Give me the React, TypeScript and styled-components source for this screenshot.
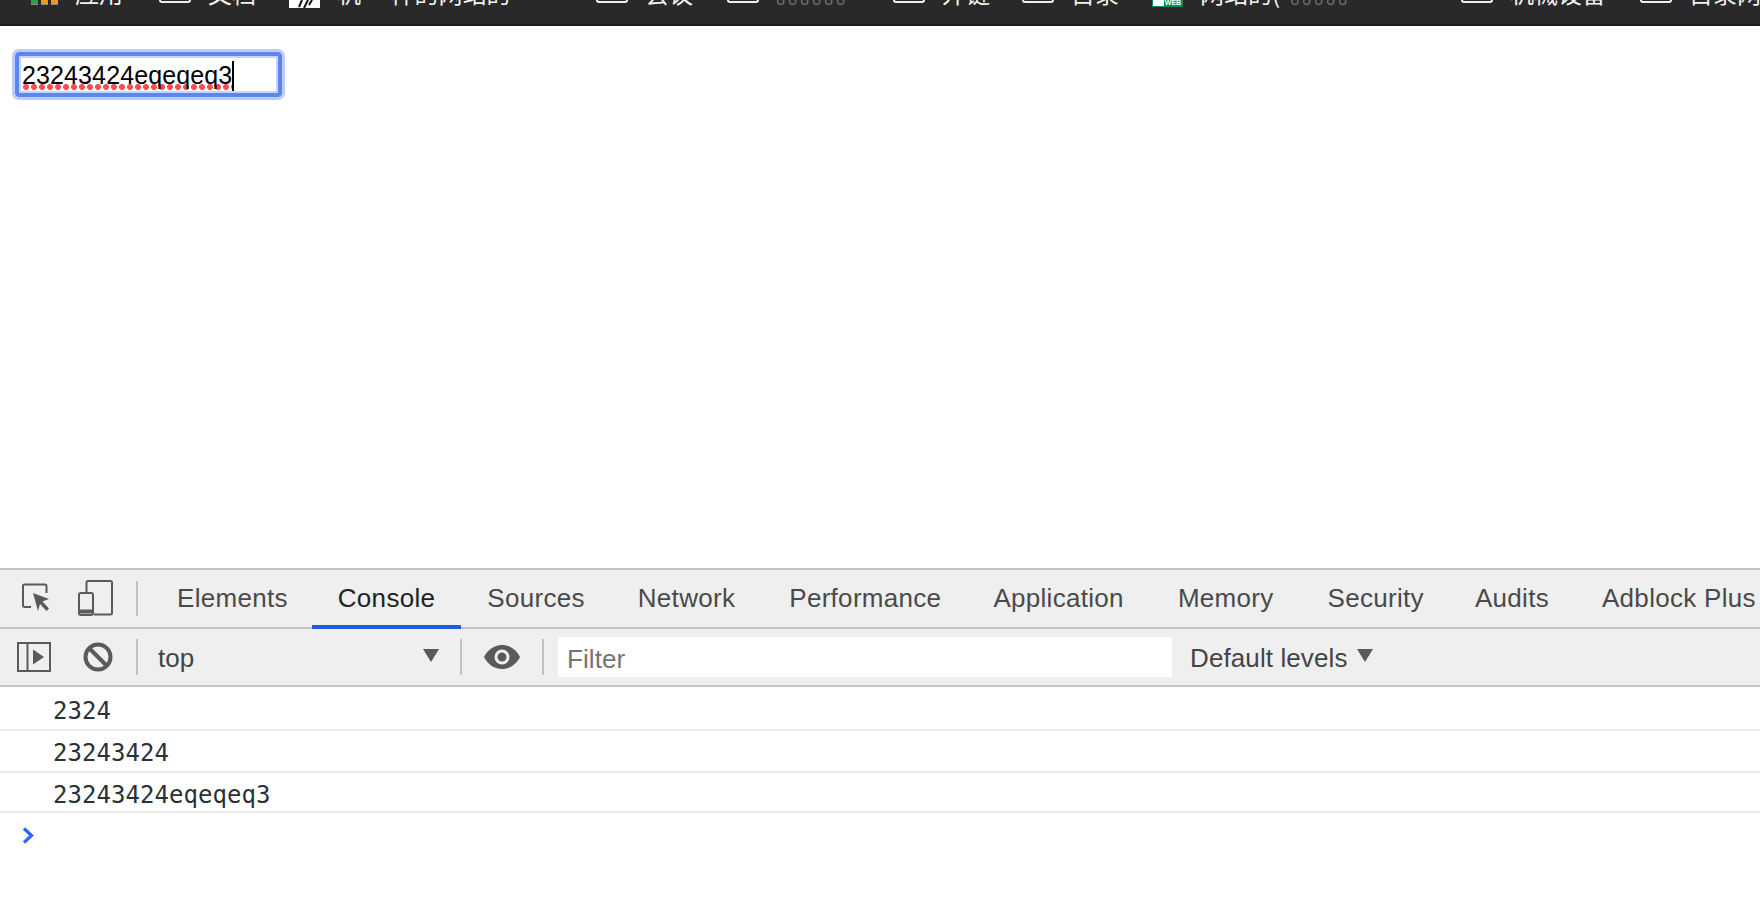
import React from 'react'
import styled, { createGlobalStyle } from 'styled-components'

const GlobalStyle = createGlobalStyle`
  html, body {
    margin: 0;
    padding: 0;
    height: 100%;
    background: #ffffff;
    overflow: hidden;
  }
`

const Page = styled.div`
  width: 1760px;
  height: 906px;
  display: flex;
  flex-direction: column;
  font-family: 'Liberation Sans', Arial, sans-serif;
  overflow: hidden;
`

const BookmarkBar = styled.div`
  flex: none;
  height: 24px;
  background: #292929;
  border-bottom: 2px solid #1e1e1e;
  overflow: hidden;
`

const BookmarkRow = styled.div`
  display: flex;
  align-items: flex-end;
  height: 30px;
  margin-top: -22px;
  padding-left: 31px;
`

const Bookmark = styled.div<{ $width: number }>`
  flex: none;
  display: flex;
  align-items: flex-end;
  gap: 17px;
  width: ${({ $width }) => $width}px;
  white-space: nowrap;
`

const BookmarkLabel = styled.span<{ $dim?: boolean }>`
  font-family: 'Noto Sans CJK SC', sans-serif;
  font-size: 24px;
  line-height: 24px;
  height: 24px;
  margin-bottom: 3px;
  color: ${({ $dim }) => ($dim ? '#77777a' : '#f2f2f2')};
`

const DimTail = styled.span`
  margin-left: 10px;
  color: #77777a;
`

const Folder = styled.div`
  flex: none;
  width: 32px;
  height: 26px;
  margin-bottom: 5px;
  box-sizing: border-box;
  border: 2px solid #f0f0f0;
  border-radius: 3px;
`

const Favicon = styled.div`
  flex: none;
  display: flex;
  justify-content: center;
  align-items: flex-end;
  width: 31px;
  height: 24px;
  background: #ffffff;
`

const WebIcon = styled.div`
  flex: none;
  display: flex;
  justify-content: flex-end;
  align-items: flex-end;
  width: 31px;
  height: 24px;
  margin-bottom: 1px;
  box-sizing: border-box;
  border: 1px solid #0f8a54;
  background: #ffffff;
`

const WebBadge = styled.span`
  width: 18px;
  height: 7px;
  background: #0f8a54;
  color: #ffffff;
  font-size: 7px;
  line-height: 7px;
  font-weight: 700;
  text-align: center;
`

const AppsIcon = styled.div`
  flex: none;
  display: flex;
  gap: 3px;
  margin-bottom: 3px;
`

const AppsBar = styled.div<{ $color: string }>`
  width: 7px;
  height: 24px;
  background: ${({ $color }) => $color};
  border-bottom: 1px solid #8a8a8a;
`

const Viewport = styled.div`
  flex: none;
  height: 542px;
  box-sizing: border-box;
  padding: 23px 0 0 12px;
  background: #ffffff;
`

const FocusedField = styled.div`
  display: flex;
  align-items: center;
  box-sizing: border-box;
  width: 273px;
  height: 51px;
  padding: 2px 0 0 7px;
  background: #ffffff;
  border: 3px solid #b9cdfa;
  border-radius: 7px;
  box-shadow: inset 0 0 0 4px #5c85ee, inset 0 0 0 6px #c4d4fb;
`

const FieldText = styled.span`
  display: block;
  height: 29px;
  font-size: 25px;
  line-height: 29px;
  letter-spacing: 0.12px;
  color: #000000;
  background-image: radial-gradient(circle at 4px 3px, #ff4b55 2.6px, transparent 3.4px);
  background-size: 8px 6px;
  background-repeat: repeat-x;
  background-position: 0 100%;
`

const Caret = styled.span`
  width: 2px;
  height: 30px;
  background: #000000;
`

const DevTools = styled.div`
  flex: 1;
  display: flex;
  flex-direction: column;
  background: #ffffff;
`

const Toolbar = styled.div<{ $height: number; $closed?: boolean }>`
  flex: none;
  display: flex;
  align-items: center;
  height: ${({ $height }) => $height}px;
  background: #efefef;
  border-top: 2px solid #c5c5c5;
  border-bottom: ${({ $closed }) => ($closed ? '2px solid #c5c5c5' : 'none')};
  white-space: nowrap;
`

const IconSlot = styled.div<{ $width: number; $trail?: number }>`
  flex: none;
  display: flex;
  justify-content: center;
  align-items: center;
  box-sizing: border-box;
  width: ${({ $width }) => $width}px;
  padding-right: ${({ $trail }) => $trail ?? 0}px;
  color: #5a5a5a;
`

const Divider = styled.div<{ $height: number }>`
  flex: none;
  width: 2px;
  height: ${({ $height }) => $height}px;
  background: #c2c2c2;
`

const Tabs = styled.div`
  display: flex;
  align-self: stretch;
  margin-left: 13px;
`

const Tab = styled.div<{ $active?: boolean; $nudge: number }>`
  position: relative;
  display: flex;
  align-items: center;
  box-sizing: border-box;
  padding: 2px ${({ $nudge }) => 26 + $nudge}px 0 26px;
  margin-bottom: -2px;
  font-size: 26px;
  letter-spacing: 0.3px;
  color: ${({ $active }) => ($active ? '#222222' : '#4a4a4a')};
  border-bottom: 4px solid ${({ $active }) => ($active ? '#1a5fdd' : 'transparent')};
`

const ContextSelect = styled.div`
  flex: none;
  display: flex;
  justify-content: space-between;
  align-items: center;
  box-sizing: border-box;
  width: 322px;
  padding: 2px 21px 0 20px;
  font-size: 26px;
  color: #444444;
`

const Arrow = styled.span`
  flex: none;
  width: 0;
  height: 0;
  margin-bottom: 6px;
  border-left: 8px solid transparent;
  border-right: 8px solid transparent;
  border-top: 13px solid #5a5a5a;
`

const FilterBox = styled.div`
  flex: none;
  display: flex;
  align-items: center;
  box-sizing: border-box;
  width: 614px;
  height: 40px;
  margin-left: 14px;
  padding: 4px 0 0 9px;
  background: #ffffff;
  color: #757575;
  font-size: 26px;
  letter-spacing: 0.1px;
`

const LevelsMenu = styled.div`
  display: flex;
  align-items: center;
  gap: 10px;
  margin-left: 18px;
  padding-top: 2px;
  font-size: 26px;
  letter-spacing: 0.1px;
  color: #444444;
`

const ConsoleRow = styled.div<{ $height: number; $top: number }>`
  flex: none;
  box-sizing: border-box;
  height: ${({ $height }) => $height}px;
  padding: ${({ $top }) => $top}px 0 0 53px;
  border-bottom: 2px solid #ececec;
  font-family: 'DejaVu Sans Mono', monospace;
  font-size: 24px;
  line-height: 28px;
  letter-spacing: 0.05px;
  color: #2a3138;
`

const PromptRow = styled.div`
  padding: 14px 0 0 22px;
  color: #2a68f5;
`

const InspectIcon = () => (
  <svg width="30" height="34" viewBox="0 0 30 34" fill="none">
    <path d="M10 25H3.5A1.5 1.5 0 0 1 2 23.5V4A1.5 1.5 0 0 1 3.5 2.500H24A1.500 1.500 0 0 1 25.500 4V11" stroke="currentColor" strokeWidth="2" />
    <path d="M12 11l16 6-6.500 2.500 6.500 7-2.500 2.500-6.500-7-2 7z" fill="currentColor" />
  </svg>
)

const DeviceIcon = () => (
  <svg width="35" height="37" viewBox="0 0 35 37" fill="none" stroke="currentColor">
    <path d="M8.500 12V2.500A1.500 1.500 0 0 1 10 1h22.500A1.500 1.500 0 0 1 34 2.500V33a1.500 1.500 0 0 1-1.500 1.500H16" strokeWidth="2" />
    <rect x="1" y="13" width="14" height="22" rx="2" strokeWidth="2" />
    <path d="M1 31.500h14" strokeWidth="4" />
  </svg>
)

const SidebarIcon = () => (
  <svg width="34" height="30" viewBox="0 0 34 30" fill="none" stroke="currentColor" strokeWidth="2">
    <rect x="1" y="1" width="32" height="28" />
    <path d="M10.500 1v28" />
    <path d="M16 7.500l11 7.500-11 7.500z" fill="currentColor" stroke="none" />
  </svg>
)

const BanIcon = () => (
  <svg width="30" height="30" viewBox="0 0 30 30" fill="none" stroke="currentColor" strokeWidth="4">
    <circle cx="15" cy="15" r="12.500" />
    <path d="M6 6l18 18" />
  </svg>
)

const EyeIcon = () => (
  <svg width="36" height="24" viewBox="0 0 36 24">
    <path d="M18 0C10 0 3.500 5 0 12c3.500 7 10 12 18 12s14.500-5 18-12C32.500 5 26 0 18 0z" fill="currentColor" />
    <circle cx="18" cy="12" r="7.500" fill="#efefef" />
    <circle cx="18" cy="12" r="4.500" fill="currentColor" />
  </svg>
)

const PromptIcon = () => (
  <svg width="12" height="17" viewBox="0 0 12 17" fill="none" stroke="currentColor" strokeWidth="3.200">
    <path d="M2 1.500l7.500 7-7.500 7" />
  </svg>
)

const FeatherMark = () => (
  <svg width="31" height="8" viewBox="0 0 31 8" fill="none" stroke="#111111" strokeWidth="2">
    <path d="M13 0l-3 7M19 0l-4 8M23 0l-3 5" />
  </svg>
)

// nudge: tab widths in the reference differ a little from Liberation Sans metrics
const tabs = [
  { name: 'Elements', nudge: -2 },
  { name: 'Console', nudge: 0 },
  { name: 'Sources', nudge: 1 },
  { name: 'Network', nudge: 2 },
  { name: 'Performance', nudge: 0 },
  { name: 'Application', nudge: 2 },
  { name: 'Memory', nudge: 2 },
  { name: 'Security', nudge: -1 },
  { name: 'Audits', nudge: 1 },
  { name: 'Adblock Plus', nudge: 0 }
]
const logs = [
  { text: '2324', height: 44, top: 10 },
  { text: '23243424', height: 42, top: 8 },
  { text: '23243424eqeqeq3', height: 40, top: 8 }
]

export default function App() {
  return (
    <Page>
      <GlobalStyle />
      <BookmarkBar>
        <BookmarkRow>
          <Bookmark $width={128}>
            <AppsIcon>
              <AppsBar $color="#2f9e4f" />
              <AppsBar $color="#ef9a12" />
              <AppsBar $color="#ef9a12" />
            </AppsIcon>
            <BookmarkLabel>应用</BookmarkLabel>
          </Bookmark>
          <Bookmark $width={130}>
            <Folder />
            <BookmarkLabel>文档</BookmarkLabel>
          </Bookmark>
          <Bookmark $width={307}>
            <Favicon>
              <FeatherMark />
            </Favicon>
            <BookmarkLabel>机 一样的网站的</BookmarkLabel>
          </Bookmark>
          <Bookmark $width={131}>
            <Folder />
            <BookmarkLabel>会议</BookmarkLabel>
          </Bookmark>
          <Bookmark $width={166}>
            <Folder />
            <BookmarkLabel $dim>。。。。。。</BookmarkLabel>
          </Bookmark>
          <Bookmark $width={129}>
            <Folder />
            <BookmarkLabel>外链</BookmarkLabel>
          </Bookmark>
          <Bookmark $width={130}>
            <Folder />
            <BookmarkLabel>目录</BookmarkLabel>
          </Bookmark>
          <Bookmark $width={309}>
            <WebIcon>
              <WebBadge>WEB</WebBadge>
            </WebIcon>
            <BookmarkLabel>
              网站的(<DimTail>。。。。。</DimTail>
            </BookmarkLabel>
          </Bookmark>
          <Bookmark $width={179}>
            <Folder />
            <BookmarkLabel>机械设备</BookmarkLabel>
          </Bookmark>
          <Bookmark $width={120}>
            <Folder />
            <BookmarkLabel>目录网站</BookmarkLabel>
          </Bookmark>
        </BookmarkRow>
      </BookmarkBar>
      <Viewport>
        <FocusedField>
          <FieldText>23243424eqeqeq3</FieldText>
          <Caret />
        </FocusedField>
      </Viewport>
      <DevTools>
        <Toolbar $height={57}>
          <IconSlot $width={72}>
            <InspectIcon />
          </IconSlot>
          <IconSlot $width={64} $trail={17}>
            <DeviceIcon />
          </IconSlot>
          <Divider $height={35} />
          <Tabs>
            {tabs.map(tab => (
              <Tab key={tab.name} $active={tab.name === 'Console'} $nudge={tab.nudge}>
                {tab.name}
              </Tab>
            ))}
          </Tabs>
        </Toolbar>
        <Toolbar $height={56} $closed>
          <IconSlot $width={67}>
            <SidebarIcon />
          </IconSlot>
          <IconSlot $width={69} $trail={8}>
            <BanIcon />
          </IconSlot>
          <Divider $height={36} />
          <ContextSelect>
            top
            <Arrow />
          </ContextSelect>
          <Divider $height={36} />
          <IconSlot $width={80}>
            <EyeIcon />
          </IconSlot>
          <Divider $height={36} />
          <FilterBox>Filter</FilterBox>
          <LevelsMenu>
            Default levels
            <Arrow />
          </LevelsMenu>
        </Toolbar>
        {logs.map(log => (
          <ConsoleRow key={log.text} $height={log.height} $top={log.top}>
            {log.text}
          </ConsoleRow>
        ))}
        <PromptRow>
          <PromptIcon />
        </PromptRow>
      </DevTools>
    </Page>
  )
}
